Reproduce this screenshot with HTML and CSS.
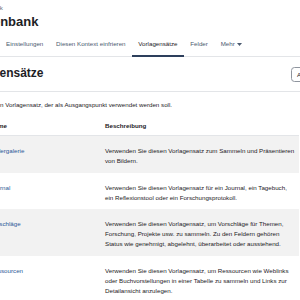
FILE: index.html
```html
<!DOCTYPE html>
<html lang="de">
<head>
    <meta charset="UTF-8">
    <meta name="viewport" content="width=device-width, initial-scale=1.0">
    <title>Vorlagensätze</title>
    <link rel="stylesheet" href="styles.css">
</head>
<body>
    <div class="page">
        <div class="crumbs">Datenbank</div>
        <h1 class="title">Datenbank</h1>

        <!-- Secondary navigation -->
        <div class="tabs">
            <a href="#" class="tab">Datenbank</a>
            <a href="#" class="tab">Einstellungen</a>
            <a href="#" class="tab">Diesen Kontext einfrieren</a>
            <a href="#" class="tab active">Vorlagensätze</a>
            <a href="#" class="tab">Felder</a>
            <a href="#" class="tab">Mehr <svg class="caret" width="5" height="3" viewBox="0 0 5 3"><path d="M0 0h5L2.5 3z" fill="currentColor"/></svg></a>
        </div>

        <div class="head-row">
            <h2 class="subtitle">Vorlagensätze</h2>
            <button class="btn">Aktionen</button>
        </div>

        <p class="intro">Wählen Sie einen Vorlagensatz, der als Ausgangspunkt verwendet werden soll.</p>

        <!-- Presets table -->
        <table class="presets">
            <colgroup>
                <col class="c-select">
                <col class="c-name">
                <col class="c-desc">
                <col class="c-act">
            </colgroup>
            <thead>
                <tr>
                    <th></th>
                    <th>Name</th>
                    <th>Beschreibung</th>
                    <th></th>
                </tr>
            </thead>
            <tbody>
                <tr>
                    <td><input type="radio" name="preset"></td>
                    <td><a href="#">Bildergalerie</a></td>
                    <td>Verwenden Sie diesen Vorlagensatz zum Sammeln und Präsentieren von Bildern.</td>
                    <td></td>
                </tr>
                <tr>
                    <td><input type="radio" name="preset"></td>
                    <td><a href="#">Journal</a></td>
                    <td>Verwenden Sie diesen Vorlagensatz für ein Journal, ein Tagebuch, ein Reflexionstool oder ein Forschungsprotokoll.</td>
                    <td></td>
                </tr>
                <tr>
                    <td><input type="radio" name="preset"></td>
                    <td><a href="#">Vorschläge</a></td>
                    <td>Verwenden Sie diesen Vorlagensatz, um Vorschläge für Themen, Forschung, Projekte usw. zu sammeln. Zu den Feldern gehören Status wie genehmigt, abgelehnt, überarbeitet oder ausstehend.</td>
                    <td></td>
                </tr>
                <tr>
                    <td><input type="radio" name="preset"></td>
                    <td><a href="#">Ressourcen</a></td>
                    <td>Verwenden Sie diesen Vorlagensatz, um Ressourcen wie Weblinks oder Buchvorstellungen in einer Tabelle zu sammeln und Links zur Detailansicht anzulegen.</td>
                    <td></td>
                </tr>
            </tbody>
        </table>
    </div>
</body>
</html>
```

FILE: styles.css
```css
/* Basic reset */
* {
    margin: 0;
    padding: 0;
    box-sizing: border-box;
    font-family: "Liberation Sans", Arial, sans-serif;
}

body {
    overflow: hidden;
    color: #1d2125;
    background: #fff;
}

/* Page is wider than the window, shifted left */
.page {
    width: 400px;
    margin-left: -45px;
    font-size: 6.2px;
    line-height: 10px;
}

.crumbs {
    padding-top: 3px;
    margin-left: 18px;
    color: #6a737b;
}

.title {
    margin-top: 1px;
    margin-left: 17px;
    font-size: 13px;
    line-height: 16px;
    font-weight: bold;
}

/* Tabs */
.tabs {
    display: flex;
    margin-top: 9px;
    padding-left: 2px;
    border-bottom: 1px solid #e3e5e8;
}

.tab {
    display: flex;
    align-items: center;
    gap: 2px;
    padding: 0 6.4px 6px;
    margin-bottom: -1px;
    color: #4b5a70;
    text-decoration: none;
    border-bottom: 2px solid transparent;
}

.tab.active {
    color: #1d2125;
    border-bottom-color: #2d3f5c;
}

.caret {
    display: block;
}

/* Heading row */
.head-row {
    display: flex;
    align-items: flex-start;
    padding: 8px 30px 9px 0;
    border-bottom: 1px solid #e3e5e8;
}

.subtitle {
    margin-left: 8px;
    font-size: 12px;
    line-height: 16px;
    font-weight: bold;
}

.btn {
    margin-left: auto;
    margin-top: 2px;
    height: 15px;
    width: 34px;
    padding: 0 5px;
    font-size: 6.2px;
    text-align: left;
    color: #1d2125;
    background: #fff;
    border: 1px solid #8f959e;
    border-radius: 3.5px;
}

.intro {
    margin-top: 8px;
}

/* Presets table */
.presets {
    margin-top: 11px;
    width: 344px;
    border-collapse: collapse;
    table-layout: fixed;
}

.c-select { width: 31px; }
.c-name { width: 115px; }
.c-desc { width: 198px; }

.presets th {
    padding: 0 4px 4px;
    text-align: left;
    font-weight: bold;
    border-bottom: 1px solid #e3e5e8;
}

.presets td {
    padding: 10px 4px 6.5px;
    vertical-align: top;
}

.presets tbody tr:nth-child(odd) {
    background: #f2f2f2;
}

.presets a {
    color: #2c5796;
    text-decoration: none;
}

.presets input {
    width: 8px;
    height: 8px;
}
```
